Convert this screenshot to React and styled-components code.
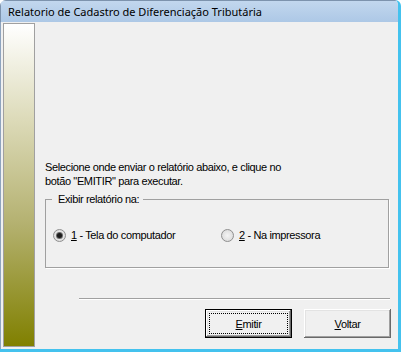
import React from "react";
import styled, { createGlobalStyle } from "styled-components";

const Global = createGlobalStyle`
  html, body { margin: 0; padding: 0; background: #ffffff; }
  * { box-sizing: border-box; }
`;

const Window = styled.div`
  width: 401px;
  height: 352px;
  display: flex;
  flex-direction: column;
  background: #f0f0f0;
  border-right: 3px solid #44c2ee;
  border-bottom: 3px solid #44c2ee;
  border-radius: 6px 6px 0 0;
  overflow: hidden;
  font-family: "Liberation Sans", Arial, sans-serif;
  font-size: 11px;
  letter-spacing: -0.37px;
  color: #000;
`;

const TitleBar = styled.div`
  height: 22px;
  flex: none;
  padding-left: 7px;
  line-height: 22px;
  font-family: "Noto Sans", "Open Sans", sans-serif;
  font-size: 11px;
  letter-spacing: 0;
  color: #000;
  background: linear-gradient(#c2d7ee, #adc8e6);
  border-left: 1px solid #7d93ad;
  border-top: 1px solid #7d93ad;
  white-space: nowrap;
`;

const Body = styled.div`
  flex: 1;
  display: flex;
  min-height: 0;
  padding: 1px 0 2px 2px;
  border-left: 1px solid #8ea4be;
`;

const SidePanel = styled.div`
  width: 32px;
  flex: none;
  border: 1px solid #a0a0a0;
  background: linear-gradient(#ffffff 0%, #dcdab8 30%, #b4b170 62%, #808000 100%);
`;

const Content = styled.div`
  flex: 1;
  display: flex;
  flex-direction: column;
  padding: 137px 7px 8px 10px;
`;

const Message = styled.p`
  margin: 0;
  line-height: 14px;
`;

const Group = styled.fieldset`
  margin: 4px 2px 0 0;
  padding: 22px 0 25px 7px;
  border: 1px solid #a0a0a0;
  box-shadow: 1px 1px 0 #ffffff;
  min-width: 0;
`;

const Legend = styled.legend`
  padding: 0 4px 0 6px;
  margin-left: -1px;
  line-height: 14px;
`;

const Options = styled.div`
  display: grid;
  grid-template-columns: 168px auto;
  align-items: center;
  height: 14px;
`;

const Option = styled.label`
  display: flex;
  align-items: center;
  gap: 5px;
  line-height: 14px;
  white-space: nowrap;
`;

const RadioCircle = styled.span`
  width: 13px;
  height: 13px;
  flex: none;
  border-radius: 50%;
  border: 1px solid #8f8f8f;
  background: radial-gradient(circle at 50% 50%, #f4f4f4 0%, #e2e2e2 60%, #cfcfcf 100%);
  display: flex;
  align-items: center;
  justify-content: center;
  &::after {
    content: "";
    width: 5px;
    height: 5px;
    border-radius: 50%;
    background: ${(p) => (p.$checked ? "#1c1c1c" : "transparent")};
    box-shadow: ${(p) => (p.$checked ? "0 0 0 1px #6a6a6a" : "none")};
  }
`;

const Separator = styled.div`
  height: 2px;
  margin: 30px 1px 0 34px;
  border-top: 1px solid #a0a0a0;
  border-bottom: 1px solid #ffffff;
`;

const ButtonRow = styled.div`
  display: flex;
  justify-content: flex-end;
  gap: 12px;
  margin-top: 9px;
`;

const Button = styled.button`
  width: 87px;
  height: 29px;
  padding: 0;
  font-family: inherit;
  font-size: 11px;
  letter-spacing: inherit;
  color: #000;
  background: #f0f0f0;
  border: ${(p) => (p.$default ? "1px solid #000" : "none")};
  box-shadow: inset -1px -1px 0 #696969, inset 1px 1px 0 #ffffff,
    inset -2px -2px 0 #a0a0a0, inset 2px 2px 0 #e3e3e3;
  display: flex;
  align-items: center;
  justify-content: center;
  position: relative;
  &::after {
    content: "";
    position: absolute;
    inset: 3px;
    border: 1px dotted #000;
    display: ${(p) => (p.$default ? "block" : "none")};
  }
`;

export default function App() {
  return (
    <>
      <Global />
      <Window>
        <TitleBar>Relatorio de Cadastro de Diferenciação Tributária</TitleBar>
        <Body>
          <SidePanel />
          <Content>
            <Message>
              Selecione onde enviar o relatório abaixo, e clique no
              <br />
              botão "EMITIR" para executar.
            </Message>
            <Group>
              <Legend>Exibir relatório na:</Legend>
              <Options>
                <Option>
                  <RadioCircle $checked />
                  <span>
                    <u>1</u> - Tela do computador
                  </span>
                </Option>
                <Option>
                  <RadioCircle />
                  <span>
                    <u>2</u> - Na impressora
                  </span>
                </Option>
              </Options>
            </Group>
            <Separator />
            <ButtonRow>
              <Button $default>
                <span>
                  <u>E</u>mitir
                </span>
              </Button>
              <Button>
                <span>
                  <u>V</u>oltar
                </span>
              </Button>
            </ButtonRow>
          </Content>
        </Body>
      </Window>
    </>
  );
}
